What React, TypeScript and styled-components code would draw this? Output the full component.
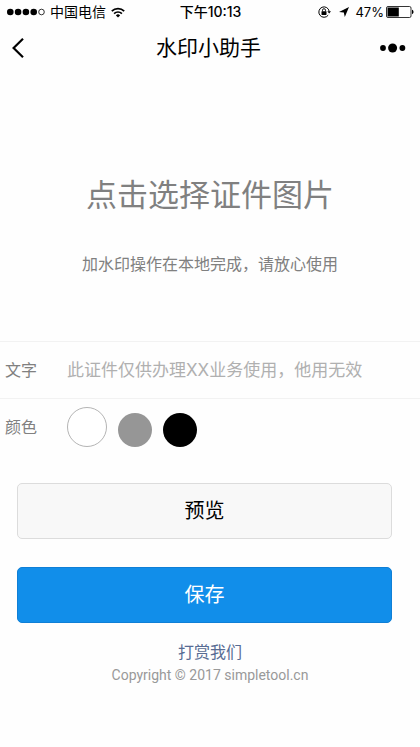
import React, { useState } from "react";
import styled, { createGlobalStyle } from "styled-components";

const GlobalStyle = createGlobalStyle`
  *, *::before, *::after { box-sizing: border-box; }
  body {
    margin: 0;
    background: #fefefe;
    color: #000;
    font-family: Inter, "Noto Sans CJK SC", sans-serif;
  }
  button, input { font-family: inherit; }
`;

const Page = styled.div`
  display: flex;
  flex-direction: column;
  min-height: 100vh;
`;

const StatusBar = styled.div`
  display: grid;
  grid-template-columns: 1fr auto 1fr;
  align-items: center;
  height: 24px;
  padding: 0 6px 0 7px;
  font-size: 14px;
  line-height: 20px;
`;

const StatusGroup = styled.div<{ $end?: boolean }>`
  display: flex;
  align-items: center;
  justify-content: ${(p) => (p.$end ? "flex-end" : "flex-start")};
  gap: ${(p) => (p.$end ? 2 : 5)}px;
`;

const Clock = styled.time`
  font-weight: 500;
`;

const BatteryLevel = styled.span`
  font-size: 13px;
`;

const StatusIcon = styled.svg<{ $gap?: number }>`
  display: block;
  flex: none;
  margin-right: ${(p) => p.$gap ?? 0}px;
`;

const NavBar = styled.header`
  display: grid;
  grid-template-columns: 1fr auto 1fr;
  align-items: center;
  height: 48px;
  padding: 0 14px 0 11px;
`;

const Title = styled.h1`
  margin: 0;
  font-size: 21px;
  line-height: 32px;
  font-weight: 400;
`;

const IconButton = styled.button<{ $end?: boolean }>`
  display: flex;
  justify-self: ${(p) => (p.$end ? "end" : "start")};
  padding: 0;
  border: 0;
  background: none;
  color: inherit;
`;

const Picker = styled.button`
  display: flex;
  flex-direction: column;
  align-items: center;
  gap: 34px;
  width: 100%;
  padding: 100px 0 65px;
  border: 0;
  background: none;
  color: #808080;
`;

const PickerTitle = styled.span`
  font-size: 31px;
  line-height: 46px;
`;

const PickerHint = styled.span`
  font-size: 16px;
  line-height: 24px;
`;

const Form = styled.form`
  display: flex;
  flex-direction: column;
`;

const Row = styled.div`
  display: flex;
  align-items: center;
  height: 57px;
  padding-left: 5px;
  border-top: 1px solid #f2f2f2;
`;

const Label = styled.span`
  flex: none;
  width: 62px;
  color: #808080;
  font-size: 16px;
  line-height: 24px;
`;

const TextInput = styled.input`
  flex: 1;
  min-width: 0;
  padding: 0;
  border: 0;
  outline: 0;
  background: none;
  color: #333;
  font-size: 17px;
  line-height: 26px;
  &::placeholder { color: #b0b0b0; opacity: 1; }
`;

const Swatches = styled.div`
  display: flex;
  align-items: flex-end;
  gap: 11px;
`;

const Swatch = styled.input<{ $color: string }>`
  appearance: none;
  width: 34px;
  height: 34px;
  margin: 0;
  border-radius: 50%;
  background: ${(p) => p.$color};
  &:checked {
    width: 40px;
    height: 40px;
    border: 1px solid #b4b4b4;
  }
`;

const Actions = styled.div`
  display: flex;
  flex-direction: column;
  gap: 28px;
  padding: 28px 28px 0 17px;
`;

const Button = styled.button<{ $primary?: boolean }>`
  height: 56px;
  padding: 0;
  border: 1px solid ${(p) => (p.$primary ? "#0f7fd6" : "#dcdcdc")};
  border-radius: 5px;
  background: ${(p) => (p.$primary ? "#118eea" : "#f8f8f8")};
  color: ${(p) => (p.$primary ? "#fff" : "#000")};
  font-size: 20px;
  line-height: 30px;
`;

const Footer = styled.footer`
  display: flex;
  flex-direction: column;
  align-items: center;
  padding-top: 17px;
  color: #999;
  font-size: 14px;
  line-height: 22px;
`;

const FooterLink = styled.a`
  color: #586c94;
  font-size: 16px;
  line-height: 24px;
  text-decoration: none;
`;

const Copyright = styled.span`
  font-family: Roboto, sans-serif;
`;

const colors = [
  { name: "白色", value: "#fff" },
  { name: "灰色", value: "#969696" },
  { name: "黑色", value: "#000" },
];

export default function App() {
  const [color, setColor] = useState("#fff");
  const [text, setText] = useState("");

  return (
    <>
      <GlobalStyle />
      <Page>
        <StatusBar>
          <StatusGroup>
            <StatusIcon width="38" height="8" viewBox="0 0 38 8" aria-hidden="true">
              {[3.3, 11.1, 18.9, 26.7].map((x) => (
                <circle key={x} cx={x} cy="4" r="3.3" />
              ))}
              <circle cx="34.5" cy="4" r="2.8" fill="none" stroke="#000" strokeWidth="0.8" />
            </StatusIcon>
            <span>中国电信</span>
            <StatusIcon width="14" height="11" viewBox="0 0 14 11" fill="none" stroke="#000" strokeWidth="1.7" aria-hidden="true">
              <path d="M0.8 4.1a8.8 8.8 0 0 1 12.4 0" />
              <path d="M3.1 6.6a5.5 5.5 0 0 1 7.8 0" />
              <path d="M7 10.6 4.9 8.4a3 3 0 0 1 4.2 0Z" fill="#000" stroke="none" />
            </StatusIcon>
          </StatusGroup>
          <Clock>下午10:13</Clock>
          <StatusGroup $end>
            <StatusIcon $gap={6} width="13" height="12" viewBox="0 0 13 12" aria-hidden="true">
              <path d="M10.2 9.2A5.2 5.2 0 1 1 11.2 5.4" fill="none" stroke="#000" strokeWidth="1" />
              <path d="M9.3 5.2h3.7L11.2 7.6Z" />
              <rect x="3.5" y="5.2" width="5" height="3.7" rx="0.4" />
              <path d="M4.5 5.4V4.2a1.5 1.5 0 0 1 3 0v1.2" fill="none" stroke="#000" strokeWidth="0.9" />
            </StatusIcon>
            <StatusIcon $gap={4} width="10" height="10" viewBox="0 0 10 10" aria-hidden="true">
              <path d="M10 0 5.8 10 4.8 5.6 0 5Z" />
            </StatusIcon>
            <BatteryLevel>47%</BatteryLevel>
            <StatusIcon width="28" height="12" viewBox="0 0 28 12" aria-hidden="true">
              <rect x="0.5" y="0.5" width="24.5" height="11" rx="1.5" fill="none" stroke="#000" strokeWidth="0.8" />
              <rect x="1.5" y="1.5" width="11.3" height="9" />
              <path d="M26 3.8c2 .6 2 3.8 0 4.4Z" />
            </StatusIcon>
          </StatusGroup>
        </StatusBar>

        <NavBar>
          <IconButton type="button" aria-label="返回">
            <svg width="14" height="22" viewBox="0 0 14 22" fill="none" stroke="#000" strokeWidth="2.2">
              <path d="M12 1.8 2.6 11 12 20.2" />
            </svg>
          </IconButton>
          <Title>水印小助手</Title>
          <IconButton type="button" $end aria-label="更多">
            <svg width="26" height="10" viewBox="0 0 26 10">
              <circle cx="3" cy="5" r="2.9" />
              <circle cx="12.6" cy="5" r="4.5" />
              <circle cx="22.4" cy="5" r="2.9" />
            </svg>
          </IconButton>
        </NavBar>

        <Picker type="button">
          <PickerTitle>点击选择证件图片</PickerTitle>
          <PickerHint>加水印操作在本地完成，请放心使用</PickerHint>
        </Picker>

        <Form onSubmit={(e) => e.preventDefault()}>
          <Row>
            <Label as="label" htmlFor="watermark">文字</Label>
            <TextInput
              id="watermark"
              type="text"
              value={text}
              onChange={(e) => setText(e.target.value)}
              placeholder="此证件仅供办理XX业务使用，他用无效"
            />
          </Row>
          <Row role="radiogroup" aria-labelledby="color-label">
            <Label id="color-label">颜色</Label>
            <Swatches>
              {colors.map((c) => (
                <Swatch
                  key={c.value}
                  type="radio"
                  name="color"
                  aria-label={c.name}
                  $color={c.value}
                  checked={color === c.value}
                  onChange={() => setColor(c.value)}
                />
              ))}
            </Swatches>
          </Row>
          <Actions>
            <Button type="button">预览</Button>
            <Button type="submit" $primary>保存</Button>
          </Actions>
        </Form>

        <Footer>
          <FooterLink href="#reward">打赏我们</FooterLink>
          <Copyright>Copyright © 2017 simpletool.cn</Copyright>
        </Footer>
      </Page>
    </>
  );
}
